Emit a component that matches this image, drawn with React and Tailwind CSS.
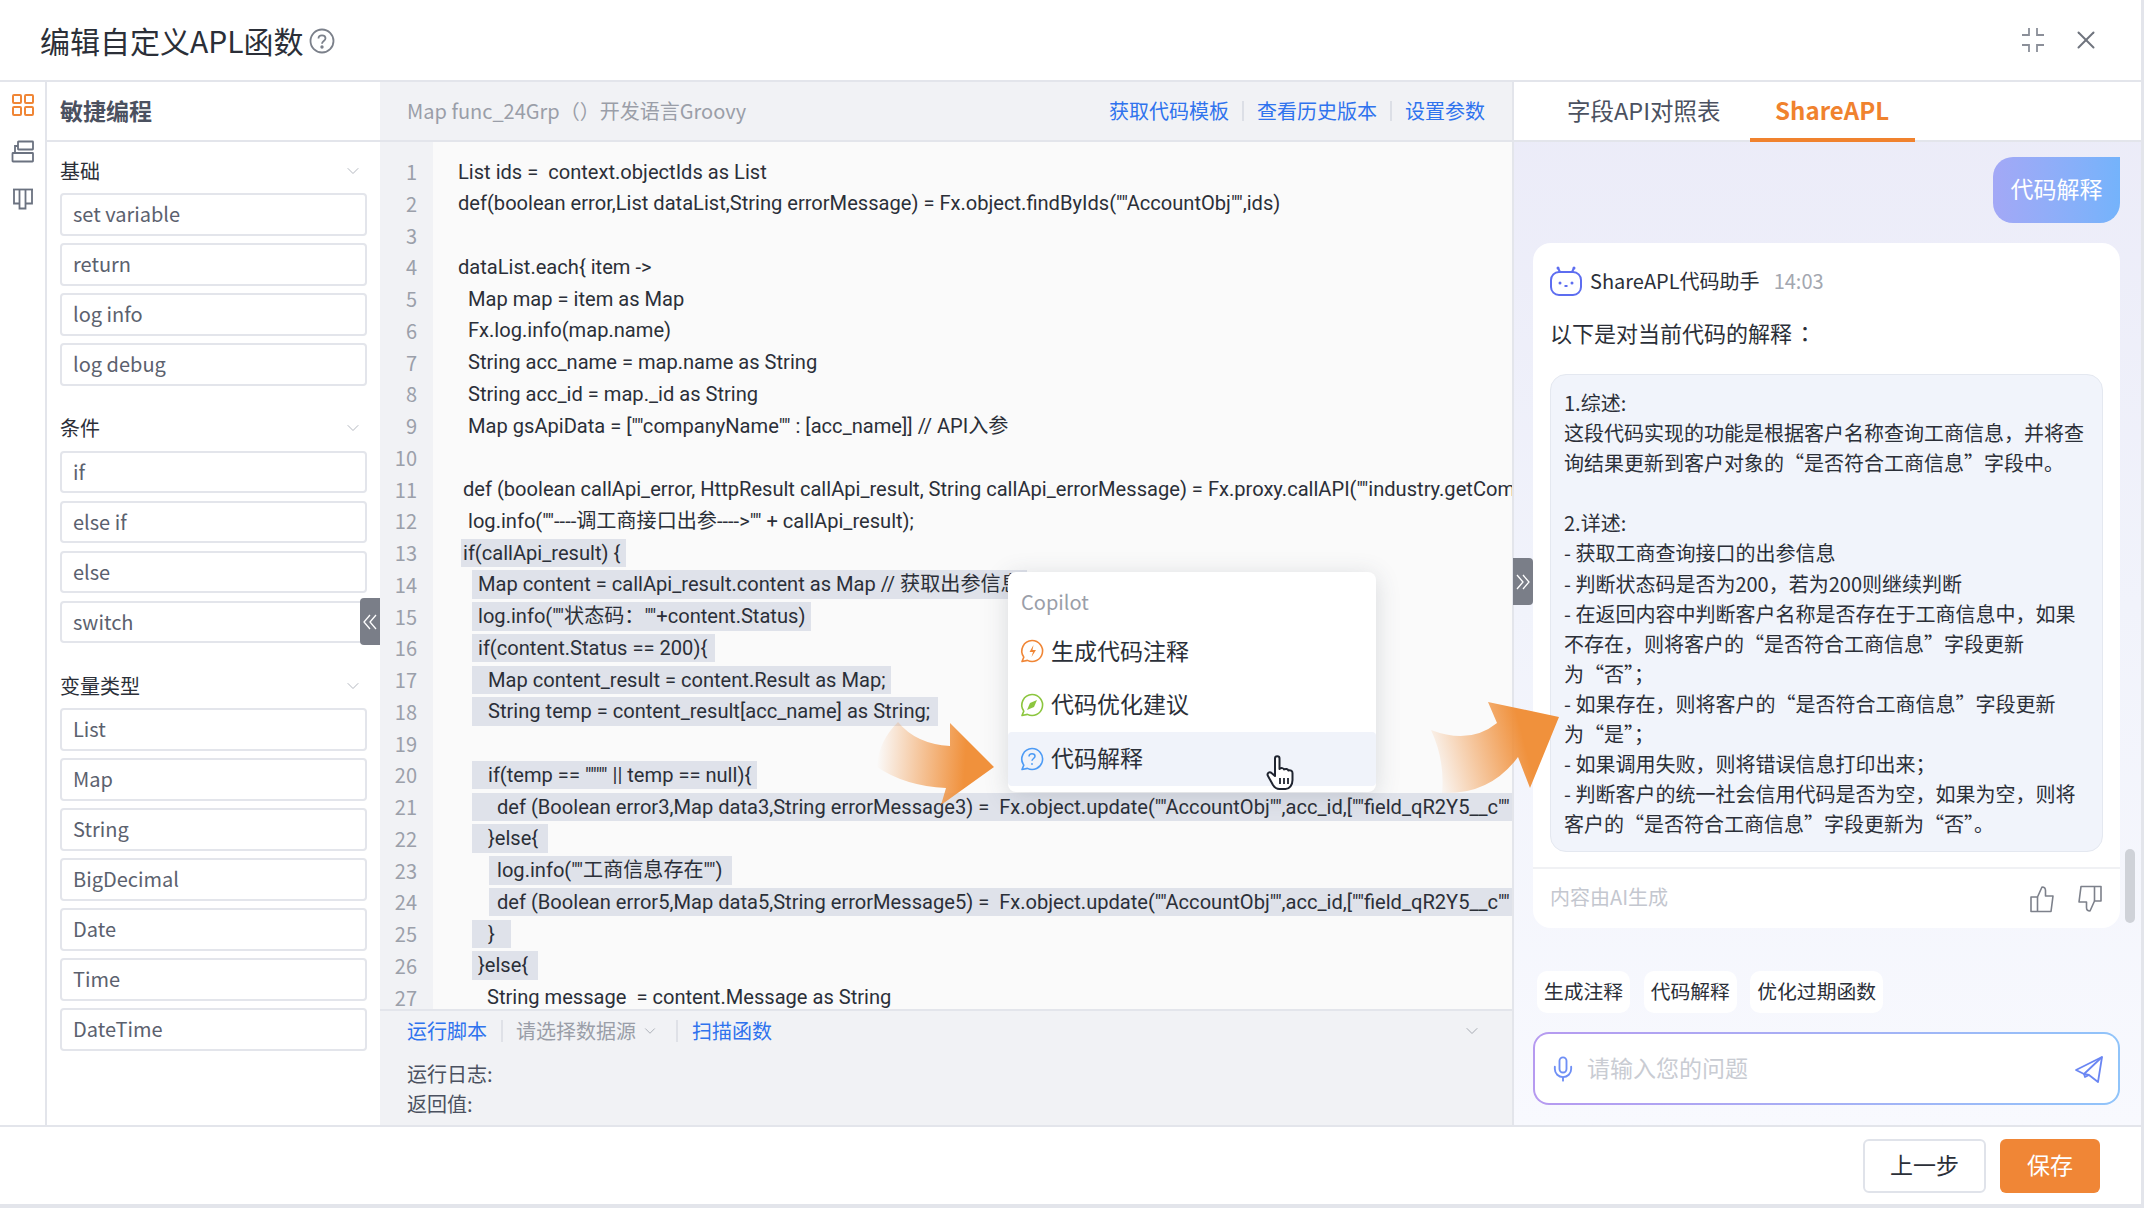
import { ChevronDown, X, Mic } from 'lucide-react';

const blocks = [
  { title: '基础', items: ['set variable', 'return', 'log info', 'log debug'] },
  { title: '条件', items: ['if', 'else if', 'else', 'switch'] },
  { title: '变量类型', items: ['List', 'Map', 'String', 'BigDecimal', 'Date', 'Time', 'DateTime'] },
];

const sel = 'bg-[#dfe2ea]';

const codeLines = [
  { t: 'List ids =  context.objectIds as List', c: 'ml-[25px]' },
  { t: 'def(boolean error,List dataList,String errorMessage) = Fx.object.findByIds(""AccountObj"",ids)', c: 'ml-[25px]' },
  { t: '', c: '' },
  { t: 'dataList.each{ item ->', c: 'ml-[25px]' },
  { t: 'Map map = item as Map', c: 'ml-[35px]' },
  { t: 'Fx.log.info(map.name)', c: 'ml-[35px]' },
  { t: 'String acc_name = map.name as String', c: 'ml-[35px]' },
  { t: 'String acc_id = map._id as String', c: 'ml-[35px]' },
  { t: 'Map gsApiData = [""companyName"" : [acc_name]] // API入参', c: 'ml-[35px]' },
  { t: '', c: '' },
  { t: 'def (boolean callApi_error, HttpResult callApi_result, String callApi_errorMessage) = Fx.proxy.callAPI(""industry.getCom', c: 'ml-[30px]' },
  { t: 'log.info(""----调工商接口出参---->"" + callApi_result);', c: 'ml-[35px]' },
  { t: 'if(callApi_result) {', c: `ml-[28px] pl-[2px] pr-[6px] ${sel}` },
  { t: 'Map content = callApi_result.content as Map // 获取出参信息', c: `ml-[39px] pl-[6px] pr-[6px] ${sel}` },
  { t: 'log.info(""状态码：""+content.Status)', c: `ml-[39px] pl-[6px] pr-[6px] ${sel}` },
  { t: 'if(content.Status == 200){', c: `ml-[39px] pl-[6px] pr-[8px] ${sel}` },
  { t: 'Map content_result = content.Result as Map;', c: `ml-[39px] pl-[16px] pr-[6px] ${sel}` },
  { t: 'String temp = content_result[acc_name] as String;', c: `ml-[39px] pl-[16px] pr-[8px] ${sel}` },
  { t: '', c: '' },
  { t: 'if(temp == """" || temp == null){', c: `ml-[39px] pl-[16px] pr-[6px] ${sel}` },
  { t: 'def (Boolean error3,Map data3,String errorMessage3) =  Fx.object.update(""AccountObj"",acc_id,[""field_qR2Y5__c""', c: `ml-[39px] pl-[25px] flex-1 ${sel}` },
  { t: '}else{', c: `ml-[39px] pl-[16px] pr-[10px] ${sel}` },
  { t: 'log.info(""工商信息存在"")', c: `ml-[56px] pl-[8px] pr-[10px] ${sel}` },
  { t: 'def (Boolean error5,Map data5,String errorMessage5) =  Fx.object.update(""AccountObj"",acc_id,[""field_qR2Y5__c""', c: `ml-[56px] pl-[8px] flex-1 ${sel}` },
  { t: '}', c: `ml-[39px] pl-[16px] pr-[16px] ${sel}` },
  { t: '}else{', c: `ml-[39px] pl-[6px] pr-[10px] ${sel}` },
  { t: 'String message  = content.Message as String', c: 'ml-[54px]' },
];

const explain = [
  '1.综述:',
  '这段代码实现的功能是根据客户名称查询工商信息，并将查',
  '询结果更新到客户对象的“是否符合工商信息”字段中。',
  ' ',
  '2.详述:',
  '- 获取工商查询接口的出参信息',
  '- 判断状态码是否为200，若为200则继续判断',
  '- 在返回内容中判断客户名称是否存在于工商信息中，如果',
  '不存在，则将客户的“是否符合工商信息”字段更新',
  '为“否”；',
  '- 如果存在，则将客户的“是否符合工商信息”字段更新',
  '为“是”；',
  '- 如果调用失败，则将错误信息打印出来；',
  '- 判断客户的统一社会信用代码是否为空，如果为空，则将',
  '客户的“是否符合工商信息”字段更新为“否”。',
];

function BubbleIcon({ color, children }) {
  return (
    <svg width="26" height="26" viewBox="0 0 26 26" fill="none" stroke={color} strokeWidth="1.6">
      <path d="M13 2.5a10.5 10.5 0 1 1-4.6 19.9L3 23.5l1.8-4.4A10.5 10.5 0 0 1 13 2.5z" strokeLinejoin="round" />
      {children}
    </svg>
  );
}

function GridIcon() {
  return (
    <svg width="24" height="24" viewBox="0 0 24 24" fill="none" stroke="#f08636" strokeWidth="2">
      <rect x="2" y="2" width="8" height="8" rx="1" />
      <rect x="14" y="2" width="8" height="8" rx="1" />
      <rect x="2" y="14" width="8" height="8" rx="1" />
      <rect x="14" y="14" width="8" height="8" rx="1" />
    </svg>
  );
}

function TreeIcon() {
  return (
    <svg width="24" height="24" viewBox="0 0 24 24" fill="none" stroke="#6b7280" strokeWidth="1.8">
      <rect x="7" y="1.5" width="15" height="8" rx="0.5" />
      <rect x="1.5" y="13" width="20.5" height="8.5" rx="0.5" />
      <path d="M7 6H4v7" />
    </svg>
  );
}

function BoardIcon() {
  return (
    <svg width="24" height="24" viewBox="0 0 24 24" fill="none" stroke="#6b7280" strokeWidth="1.8">
      <path d="M2 2.5h20" />
      <path d="M3 2.5v14h5.5v-14M8.5 2.5v19h6v-19M14.5 2.5v14H21v-14" />
    </svg>
  );
}

function ShrinkIcon() {
  return (
    <svg width="26" height="26" viewBox="0 0 26 26" fill="none" stroke="#8b8f99" strokeWidth="1.8">
      <path d="M9 1v7H2M17 1v7h7M9 25v-7H2M17 25v-7h7" />
    </svg>
  );
}

function RobotLogo() {
  return (
    <svg width="34" height="32" viewBox="0 0 34 32" fill="none" stroke="#5d6df0" strokeWidth="2">
      <rect x="2" y="7" width="30" height="23" rx="8" />
      <path d="M11 7L9 3M23 7l2-4" />
      <circle cx="9" cy="3" r="1.5" fill="#5d6df0" stroke="none" />
      <circle cx="25" cy="3" r="1.5" fill="#5d6df0" stroke="none" />
      <circle cx="11" cy="18" r="1.5" fill="#5d6df0" stroke="none" />
      <circle cx="23" cy="18" r="1.5" fill="#5d6df0" stroke="none" />
      <path d="M15.5 21h3" />
    </svg>
  );
}

function ThumbIcon({ down }) {
  return (
    <svg width="26" height="28" viewBox="0 0 26 28" fill="none" stroke="#7d818b" strokeWidth="1.6" className={down ? 'rotate-180' : ''}>
      <path d="M2 12h6.5L13 2c2.5 0 3.5 2 3.5 3.5V11h7.5l-2 15.5H2z" strokeLinejoin="round" />
      <path d="M8.5 12v14.5" />
    </svg>
  );
}

function DoubleChevron({ right }) {
  return (
    <svg width="16" height="18" viewBox="0 0 16 18" fill="none" stroke="#fff" strokeWidth="1.3" className={right ? 'rotate-180' : ''}>
      <path d="M8 2L2 9l6 7M14 2L8 9l6 7" />
    </svg>
  );
}

function HandCursor() {
  return (
    <svg width="30" height="36" viewBox="0 0 30 36" fill="#fff" stroke="#1f2430" strokeWidth="2" strokeLinejoin="round">
      <path d="M9 3.5c0-3 4.5-3 4.5 0V14c2-1.500 4-1 4.500 .5 1.800-1 3.800-.5 4.300 1 2-.8 4.200 .2 4.200 2.500v7c0 5-3 9-7 9h-6c-3 0-5-1.500-6.500-4L2 21c-1.500-2.500 1.500-5 3.500-3L9 21z" />
      <path d="M14 23v6M18 23v6M22 23v6" fill="none" strokeWidth="1.800" />
    </svg>
  );
}

function Arrows() {
  return (
    <svg className="absolute left-0 top-0 pointer-events-none" width="2144" height="1208" viewBox="0 0 2144 1208">
      <defs>
        <linearGradient id="ar1" gradientUnits="userSpaceOnUse" x1="877" y1="760" x2="965" y2="765">
          <stop offset="0" stopColor="#f08a33" stopOpacity="0" />
          <stop offset="1" stopColor="#f0913c" />
        </linearGradient>
        <linearGradient id="ar2" gradientUnits="userSpaceOnUse" x1="1432" y1="770" x2="1525" y2="745">
          <stop offset="0" stopColor="#f08a33" stopOpacity="0" />
          <stop offset="1" stopColor="#f0913c" />
        </linearGradient>
      </defs>
      <path d="M898 722Q916 744 950 746L950 723L994 767L941 805L946 788Q905 786 877 767Q878 742 898 722Z" fill="url(#ar1)" />
      <path d="M1431 730Q1470 745 1497 723L1488 702L1559 717L1530 788L1518 757Q1490 795 1442 793Q1445 760 1431 730Z" fill="url(#ar2)" />
    </svg>
  );
}

export default function App() {
  return (
    <div className="relative w-[2144px] h-[1208px] overflow-hidden bg-[#e3e5eb] pr-[3px] pb-[4px] flex flex-col font-['Noto_Sans_CJK_SC','Noto_Sans',sans-serif] text-[20px] text-[#2b2f38]">
      <header className="h-[80px] shrink-0 bg-white flex items-center pl-[40px] pr-[40px]">
        <h1 className="text-[30px] leading-none text-[#2b2f38] font-normal">编辑自定义APL函数</h1>
        <svg className="ml-[5px] mt-[1px]" width="26" height="26" viewBox="0 0 26 26" fill="none" stroke="#7b808a" strokeWidth="1.8">
          <circle cx="13" cy="13" r="11.500" />
          <path d="M9.500 10.500c0-2 1.500-3.200 3.500-3.200s3.500 1.200 3.500 3c0 2.800-3.500 2.700-3.500 5.500" />
          <circle cx="13" cy="19" r="0.800" fill="#7b808a" />
        </svg>
        <div className="ml-auto flex items-center gap-[25px]">
          <ShrinkIcon />
          <X size={30} strokeWidth={1.600} className="text-[#6f747e]" />
        </div>
      </header>

      <main className="h-[1043px] shrink-0 mt-[2px] flex gap-[2px]">
        <div className="w-[45px] shrink-0 bg-white flex flex-col items-center pt-[11px] gap-[23px]">
          <GridIcon />
          <TreeIcon />
          <BoardIcon />
        </div>

        <aside className="w-[333px] shrink-0 bg-white flex flex-col">
          <div className="h-[60px] shrink-0 flex items-center pl-[13px] pb-[2px] font-bold text-[23px] text-[#4b5160] border-b-2 border-[#e3e5eb]">敏捷编程</div>
          <div className="pl-[13px] pr-[13px]">
            {blocks.map((b) => (
              <section key={b.title} className="mb-[14px]">
                <div className="h-[51px] pt-[7px] pb-[1px] flex items-center justify-between text-[20px] text-[#2b2f38]">
                  <span>{b.title}</span>
                  <ChevronDown size={20} strokeWidth={1.200} className="text-[#b4b8c0] mr-[4px]" />
                </div>
                <div className="flex flex-col gap-[7.500px]">
                  {b.items.map((it) => (
                    <div key={it} className="h-[42.500px] border-2 border-[#e3e5eb] rounded-[4px] flex items-center pl-[11px] text-[#5b616e]">{it}</div>
                  ))}
                </div>
              </section>
            ))}
          </div>
        </aside>

        <section className="w-[1132px] -ml-[2px] shrink-0 flex flex-col bg-[#fafafa]">
          <div className="h-[60px] shrink-0 flex items-center bg-[#f1f2f5] border-b-2 border-[#e3e5eb] pl-[27px] pr-[27px]">
            <span className="text-[#9a9ea8]">Map func_24Grp（）开发语言Groovy</span>
            <div className="ml-auto flex items-center text-[#2f73ee]">
              <span>获取代码模板</span>
              <span className="w-[2px] h-[20px] bg-[#dcdfe6] mx-[13px]" />
              <span>查看历史版本</span>
              <span className="w-[2px] h-[20px] bg-[#dcdfe6] mx-[13px]" />
              <span>设置参数</span>
            </div>
          </div>

          <div className="h-[867px] shrink-0 overflow-hidden flex">
            <div className="w-[53px] shrink-0 bg-[#f1f2f5] pt-[14px] text-right pr-[16px] text-[#9ba0aa]">
              {codeLines.map((_, i) => (
                <div key={i} className="h-[31.750px] leading-[31.750px]">{i + 1}</div>
              ))}
            </div>
            <div className="flex-1 min-w-0 pt-[14px] text-[20.100px] text-[#2b2f38] font-['Roboto','Noto_Sans_CJK_SC',sans-serif]">
              {codeLines.map((l, i) => (
                <div key={i} className="h-[31.750px] flex items-center overflow-hidden">
                  <span className={`h-[28.500px] leading-[28.500px] whitespace-pre ${l.c}`}>{l.t}</span>
                </div>
              ))}
            </div>
          </div>

          <div className="flex-1 bg-[#f1f2f5] border-t-2 border-[#e3e5eb] pl-[27px] pr-[30px] pt-[6px]">
            <div className="flex items-center h-[28px]">
              <span className="text-[#2f73ee]">运行脚本</span>
              <span className="w-[2px] h-[22px] bg-[#dfe1e7] ml-[14px] mr-[13px]" />
              <span className="text-[#9a9ea8]">请选择数据源</span>
              <ChevronDown size={18} strokeWidth={1.200} className="text-[#a6aab2] ml-[5px]" />
              <span className="w-[2px] h-[22px] bg-[#dfe1e7] ml-[17px] mr-[14px]" />
              <span className="text-[#2f73ee]">扫描函数</span>
              <ChevronDown size={20} strokeWidth={1.200} className="text-[#a6aab2] ml-auto" />
            </div>
            <div className="mt-[14px] h-[30px] leading-[29px] text-[#4b5160]">运行日志:</div>
            <div className="h-[29px] leading-[29px] text-[#4b5160]">返回值:</div>
          </div>
        </section>

        <section className="flex-1 min-w-0 flex flex-col bg-linear-to-b from-[#ebebf8] via-[#f1f3fb] to-[#f8f9fe]">
          <div className="h-[60px] shrink-0 bg-white border-b-2 border-[#e3e5eb] flex items-end pl-[53px]">
            <span className="h-[58px] flex items-center text-[#4b5160] mr-[29px] pb-[1px] text-[23.500px]">字段API对照表</span>
            <span className="h-[60px] -mb-[2px] w-[165px] flex items-center justify-center font-bold text-[#f0822e] border-b-4 border-[#f0822e] text-[24px]">ShareAPL</span>
          </div>

          <div className="flex-1 min-h-0 pl-[19px] pr-[21px] pt-[15px]">
            <div className="flex justify-end">
              <div className="w-[127px] h-[66px] rounded-[20px] rounded-tr-none bg-linear-to-r from-[#a3a8f6] to-[#74b3fb] flex items-center justify-center pb-[4px] text-white text-[23px]">代码解释</div>
            </div>

            <div className="mt-[20px] h-[685px] bg-white rounded-[18px] flex flex-col">
              <div className="h-[78px] flex items-center pl-[16px] pb-[2px]">
                <RobotLogo />
                <span className="ml-[7px]">ShareAPL代码助手</span>
                <span className="ml-[14px] text-[#a3a7b0]">14:03</span>
              </div>
              <div className="pl-[17px] -mt-[1px] text-[22px] leading-[24px]">以下是对当前代码的解释<span className="ml-[2px] font-['Noto_Sans_CJK_TC',sans-serif]">：</span></div>
              <div className="mt-[30px] mx-[17px] h-[478px] bg-[#f1f4fb] border border-[#e4e8f0] rounded-[16px] pl-[13px] pt-[13px]">
                {explain.map((t, i) => (
                  <div key={i} className="h-[30.100px] leading-[30px] whitespace-pre text-[#2b2f38]">{t}</div>
                ))}
              </div>
              <div className="mt-[15px] flex-1 border-t-2 border-[#f0f1f4] flex items-center pl-[17px] pr-[17px]">
                <span className="text-[#c4c7cf] pb-[3px]">内容由AI生成</span>
                <div className="ml-auto flex items-center gap-[22px]">
                  <ThumbIcon />
                  <ThumbIcon down />
                </div>
              </div>
            </div>

            <div className="mt-[43px] flex gap-[13.500px] pl-[4px] text-[19.800px]">
              {['生成注释', '代码解释', '优化过期函数'].map((c) => (
                <span key={c} className="h-[42px] px-[7px] bg-white rounded-[10px] flex items-center pb-[2px]">{c}</span>
              ))}
            </div>

            <div className="mt-[19px] h-[73px] rounded-[16px] p-[2px] bg-linear-to-r from-[#b69af0] to-[#90c4fa]">
              <div className="h-full bg-white rounded-[14px] flex items-center pl-[14px] pr-[14px]">
                <Mic size={28} strokeWidth={1.600} className="text-[#6f8ff5]" />
                <span className="ml-[10px] text-[23px] text-[#c9ccd3] pb-[3px]">请输入您的问题</span>
                <svg className="ml-auto" width="30" height="30" viewBox="0 0 30 30" fill="none" stroke="#6a86f3" strokeWidth="1.800" strokeLinejoin="round">
                  <path d="M2 16L28 3l-4 25-9-7-5-1z" />
                  <path d="M28 3L10 20l1 3 4-2" />
                </svg>
              </div>
            </div>
          </div>
        </section>
      </main>

      <footer className="flex-1 mt-[2px] bg-white flex items-center justify-end pr-[41px] gap-[14px]">
        <button className="w-[123px] h-[54px] border-2 border-[#e0e3ea] rounded-[6px] text-[23px] text-[#2b2f38] bg-white pb-[2px]">上一步</button>
        <button className="w-[100px] h-[54px] rounded-[6px] text-[23px] text-white bg-[#f08636] pb-[2px]">保存</button>
      </footer>

      {/* 折叠把手 */}
      <div className="absolute left-[360px] top-[598px] w-[20px] h-[47px] bg-[#7a7e88] rounded-l-[4px] flex items-center justify-center">
        <DoubleChevron />
      </div>
      <div className="absolute left-[1513px] top-[558px] w-[20px] h-[47px] bg-[#7a7e88] rounded-r-[4px] flex items-center justify-center">
        <DoubleChevron right />
      </div>

      {/* 滚动条 */}
      <div className="absolute left-[2125px] top-[849px] w-[10px] h-[74px] rounded-full bg-[#cfd2d8]" />

      {/* 右键菜单 */}
      <div className="absolute left-[1008px] top-[572px] w-[368px] h-[220px] bg-white rounded-[8px] shadow-[0_4px_24px_rgba(60,70,90,0.18)] pt-[14px]">
        <div className="h-[34px] leading-[32px] pl-[13px] text-[#9a9ea8]">Copilot</div>
        <div className="h-[54px] mt-[4px] flex items-center pl-[11px] gap-[6px] text-[23px]">
          <BubbleIcon color="#f08636">
            <path d="M14.500 7l-4 7h3.500l-1.500 5 4.500-7h-3.500z" fill="#f08636" stroke="none" />
          </BubbleIcon>
          <span className="pb-[2px]">生成代码注释</span>
        </div>
        <div className="h-[54px] flex items-center pl-[11px] gap-[6px] text-[23px]">
          <BubbleIcon color="#8cc63f">
            <path d="M18 8l-3 7-7 3 3-7z" fill="#8cc63f" stroke="none" />
          </BubbleIcon>
          <span className="pb-[3px]">代码优化建议</span>
        </div>
        <div className="h-[54px] flex items-center pl-[11px] gap-[6px] text-[23px] bg-[#f0f3fa] rounded-[4px]">
          <BubbleIcon color="#4d9bf5">
            <path d="M10 10.500c0-1.800 1.300-2.800 3-2.800s3 1 3 2.500c0 2.300-3 2.300-3 4.600" strokeWidth="1.500" />
            <circle cx="13" cy="18" r="0.900" fill="#4d9bf5" stroke="none" />
          </BubbleIcon>
          <span className="pb-[4px]">代码解释</span>
        </div>
      </div>

      <Arrows />

      <div className="absolute left-[1266px] top-[755px]">
        <HandCursor />
      </div>
    </div>
  );
}
